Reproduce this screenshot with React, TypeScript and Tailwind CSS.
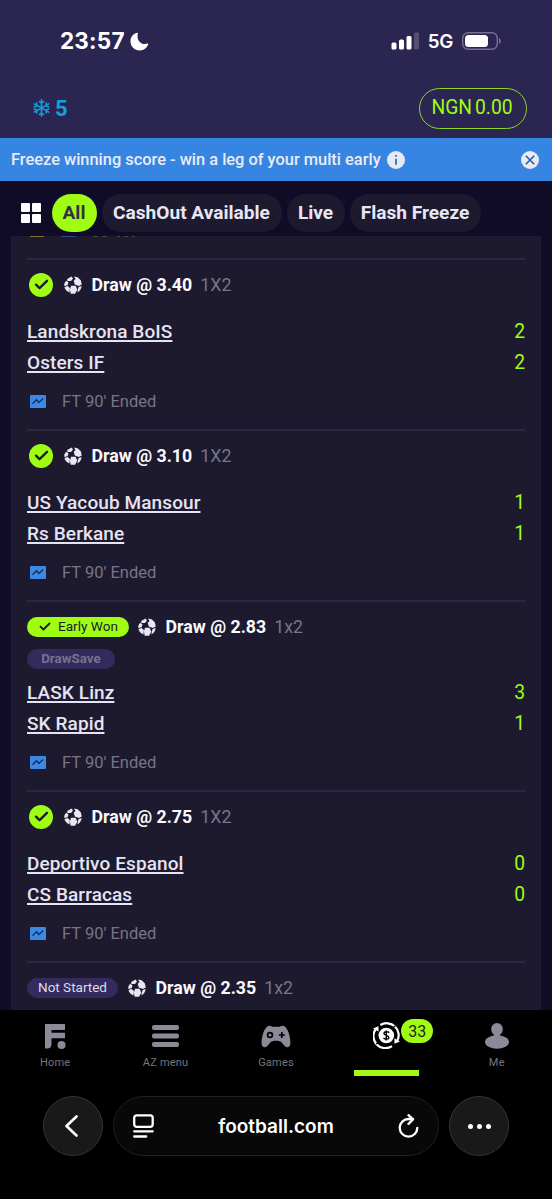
import type { ReactNode } from "react";

type Match = {
  odds: string;
  market: string;
  status: "won" | "early" | "pending";
  tag?: string;
  home?: [string, number];
  away?: [string, number];
};

const matches: Match[] = [
  { odds: "3.40", market: "1X2", status: "won", home: ["Landskrona BoIS", 2], away: ["Osters IF", 2] },
  { odds: "3.10", market: "1X2", status: "won", home: ["US Yacoub Mansour", 1], away: ["Rs Berkane", 1] },
  { odds: "2.83", market: "1x2", status: "early", tag: "DrawSave", home: ["LASK Linz", 3], away: ["SK Rapid", 1] },
  { odds: "2.75", market: "1X2", status: "won", home: ["Deportivo Espanol", 0], away: ["CS Barracas", 0] },
  { odds: "2.35", market: "1x2", status: "pending", tag: "" },
];

function Ball() {
  return (
    <svg className="h-[18px] w-[18px] shrink-0" viewBox="0 0 18 18" fill="#e9e7f2">
      <path d="M3.2 2.9 7.6.4 9 2.4 7 5 3.4 4.9Z" />
      <path d="M10 .6 13.6 1.2 16.8 4.2 17.8 8.4 14.8 10.1 10.8 8.5 9.7 4.8 11.5 3Z" />
      <path d="M2.4 4.7 4.5 6.5 3.6 9.2.3 10C0 7.5.8 6 2.4 4.7Z" />
      <path d="M.5 11 3.6 10 5.9 12.1 5.5 16.5C2.8 15.6.9 13.5.5 11Z" />
      <path d="M7.1 9.7 11.6 9.7 13.3 13.7 11 17.8 6.7 17.8 5.9 13.5Z" />
      <path d="M14.6 11.1 17.6 9.9C17.3 12.8 16 15 13.4 16.4L13.9 13.5Z" />
    </svg>
  );
}

function Check({ className }: { className: string }) {
  return (
    <svg className={className} viewBox="0 0 16 12" fill="none" stroke="#1d1b30" strokeWidth="2.5" strokeLinecap="round" strokeLinejoin="round">
      <path d="M2 6.1 5.9 10 14 2" />
    </svg>
  );
}

function Status({ status }: { status: Match["status"] }) {
  if (status === "won")
    return (
      <span className="ml-0.5 mr-[11px] flex h-6 w-6 items-center justify-center rounded-full bg-[#9ffc12]">
        <Check className="h-[11px] w-[15px]" />
      </span>
    );
  if (status === "early")
    return (
      <span className="mr-[9px] flex h-5 w-[102px] items-center rounded-full bg-[#9ffc12] pl-3 text-[13.6px] text-[#1d1b30]">
        <Check className="mr-[7px] h-[9px] w-3" />
        Early Won
      </span>
    );
  return (
    <span className="mr-[10px] flex h-5 w-[91px] items-center justify-center rounded-full bg-[#332b5c] text-[13.5px] text-[#dddbea]">
      Not Started
    </span>
  );
}

function Team({ team }: { team: [string, number] }) {
  return (
    <div className="flex h-[31.5px] items-center justify-between text-[19px] font-medium">
      <span className="tracking-[0.1px] text-[#e6e3f2] underline decoration-[1.5px] underline-offset-2 [text-decoration-skip-ink:none]">{team[0]}</span>
      <span className="pt-px text-[19.3px] font-normal text-[#9ffc12]">{team[1]}</span>
    </div>
  );
}

function MatchRow({ match }: { match: Match }) {
  const tagged = match.tag !== undefined;
  return (
    <section className={tagged ? "h-[190px] shrink-0 border-t-2 border-[#2b2746]" : "h-[171px] shrink-0 border-t-2 border-[#2b2746]"}>
      <div className="flex h-[49px] items-center">
        <Status status={match.status} />
        <Ball />
        <span className="ml-[9.5px] pt-[2px] text-[17.75px] font-bold text-[#faf9ff]">Draw @ {match.odds}</span>
        <span className="ml-[8px] pt-[2px] text-[17.8px] text-[#777587]">{match.market}</span>
      </div>
      {tagged ? (
        <div className="-mt-[4px] mb-[6px] flex h-[24px] items-center">
          <span className="flex h-5 w-[88px] items-center justify-center rounded-full bg-[#332b5c] text-[13.4px] font-bold text-[#77728c]">
            {match.tag}
          </span>
        </div>
      ) : (
        <div className="h-[7px]" />
      )}
      {match.home && match.away && (
        <>
          <Team team={match.home} />
          <Team team={match.away} />
          <div className="flex h-[46px] items-center pl-[2.5px]">
            <svg className="-mt-px h-[13px] w-4" viewBox="0 0 16 13" fill="none">
              <rect width="16" height="13" rx="1" fill="#3b88e5" />
              <path d="m2.5 8.7 4-4 2.3 2.7 4.4-4" stroke="#172c5b" strokeWidth="1.4" />
            </svg>
            <span className="ml-[16.5px] pt-px text-[16.5px] text-[#777587]">FT 90' Ended</span>
          </div>
        </>
      )}
    </section>
  );
}

function Chip({ children, className }: { children: ReactNode; className: string }) {
  return (
    <span className={`flex h-[38px] shrink-0 items-center justify-center rounded-full pt-px text-[19.1px] font-bold ${className}`}>
      {children}
    </span>
  );
}

function NavItem({ label, children }: { label: string; children: ReactNode }) {
  return (
    <div className="flex w-[110.4px] flex-col items-center pt-3">
      <div className="flex h-7 items-center">{children}</div>
      <span className="mt-[5px] text-[11px] leading-[15px] tracking-[0.2px] text-[#777481]">{label}</span>
    </div>
  );
}

export default function App() {
  return (
    <main className="flex h-[1199px] w-[552px] flex-col overflow-hidden bg-black font-['Roboto',sans-serif]">
      <header className="h-[138px] shrink-0 bg-[#2b2551]">
        <div className="flex h-[82px] items-center justify-between pl-[60px] pr-[51px] text-white">
          <div className="flex items-center font-['Inter',sans-serif] text-[22.5px] font-bold">
            <span className="tracking-[0.2px]">23:57</span>
            <svg className="ml-[5px] h-[19px] w-[19px]" viewBox="0 0 19 19" fill="white">
              <path d="M7.1.7C3 1.9.5 5 .5 9.2c0 5.2 4 9.2 9.2 9.2 4 0 7.4-2.4 8.5-6.1.2-.5-.2-.9-.7-.7-6.1 2.1-11.3-2.8-9.7-10.1.1-.5-.2-.9-.7-.8Z" />
            </svg>
          </div>
          <div className="flex items-center">
            <svg className="h-[18px] w-7" viewBox="0 0 28 18" fill="white">
              <rect x=".5" y="10.5" width="5" height="7" rx="1.5" />
              <rect x="8" y="7.5" width="5" height="10" rx="1.5" />
              <rect x="15.5" y="4" width="5" height="13.5" rx="1.5" />
              <rect x="23" y=".5" width="5" height="17" rx="1.5" opacity=".2" />
            </svg>
            <span className="ml-[9px] pt-[2px] font-['Inter',sans-serif] text-[18.8px] font-semibold tracking-[-0.3px]">5G</span>
            <svg className="ml-[9px] h-[18px] w-[39px]" viewBox="0 0 39 18">
              <rect x=".7" y=".7" width="34.6" height="16.6" rx="5.5" fill="none" stroke="#77718f" strokeWidth="1.4" />
              <rect x="3" y="3" width="23" height="12" rx="3.5" fill="white" />
              <path d="M37 6c2.3 1 2.3 5 0 6Z" fill="#77718f" />
            </svg>
          </div>
        </div>
        <div className="mt-[5px] flex h-[42px] items-center justify-between pl-[33px] pr-[25px]">
          <div className="flex items-center text-[22px] font-bold text-[#169ddd]">
            <svg className="mr-[5px] h-[18px] w-[17px]" viewBox="0 0 17 18" fill="none" stroke="#169ddd" strokeWidth="1.6" strokeLinecap="round">
              <path d="M8.5.9v16.2M6.4 2.5l2.1 1.8 2.1-1.8M6.4 15.5l2.1-1.8 2.1 1.8M1.2 4.9l14.6 8.2M1.3 7.9l2.6-1-.2-2.8m9.6 9.8-.2-2.8 2.6-1M15.8 4.9 1.2 13.1m12.1-9-.2 2.8 2.6 1M1.3 10.1l2.6 1-.2 2.8" />
            </svg>
            5
          </div>
          <div className="flex h-[41px] w-[108px] items-center justify-center rounded-full border-[1.5px] border-[#8bda22] pr-[2px] pt-px text-[19.3px] text-[#9ffc12]">
            NGN<span className="ml-[3px]">0.00</span>
          </div>
        </div>
      </header>

      <div className="flex h-[43px] shrink-0 items-center bg-[#3685e2] pl-[11px] pr-[13px] text-[16.4px] font-medium text-[#e9ecf7]">
        <span className="pt-[2px]">Freeze winning score - win a leg of your multi early</span>
        <svg className="ml-[6px] h-[18px] w-[18px]" viewBox="0 0 18 18">
          <circle cx="9" cy="9" r="9" fill="#e8eaf3" />
          <path d="M9 7.7v6M9 4v1.7" stroke="#357bcf" strokeWidth="2" />
        </svg>
        <svg className="ml-auto h-[18px] w-[18px]" viewBox="0 0 18 18">
          <circle cx="9" cy="9" r="9" fill="#e8eaf3" />
          <path d="m4.8 4.8 8.4 8.4m0-8.4-8.4 8.4" stroke="#285ca7" strokeWidth="1.6" />
        </svg>
      </div>

      <div className="flex h-[55px] shrink-0 items-center bg-[#100c27] pl-[21px] pt-2">
        <svg className="mr-[11px] h-5 w-5" viewBox="0 0 20 20" fill="white">
          <rect width="9" height="9" rx="1" /><rect x="11" width="9" height="9" rx="1" />
          <rect y="11" width="9" height="9" rx="1" /><rect x="11" y="11" width="9" height="9" rx="1" />
        </svg>
        <Chip className="w-[45px] bg-[#9ffc12] pr-px text-[#333243]">All</Chip>
        <Chip className="ml-[5px] w-[180px] bg-[#1d1a30] pr-px text-[#e9e6f4]">CashOut Available</Chip>
        <Chip className="ml-[5px] w-[58px] bg-[#1d1a30] pr-px text-[#e9e6f4]">Live</Chip>
        <Chip className="ml-[5px] w-[131px] bg-[#1d1a30] pr-px text-[#e9e6f4]">Flash Freeze</Chip>
      </div>

      <div className="h-[774px] shrink-0 overflow-hidden bg-[#100c27] px-[11px]">
        <div className="flex h-full flex-col overflow-hidden bg-[#1d1a30] px-4">
          <div className="flex h-[22px] shrink-0 items-start overflow-hidden">
            <span className="ml-[3px] h-px w-[14px] bg-[#82732b]" />
            <span className="ml-[17px] h-px w-[15px] bg-[#284b88]" />
            <span className="ml-[17px] h-px w-[5px] bg-[#4c472c]" />
            <span className="ml-[4px] h-px w-[5px] bg-[#4c472c]" />
            <span className="ml-[10px] h-px w-[3px] bg-[#4c472c]" />
            <span className="ml-[4px] h-px w-[4px] bg-[#4c472c]" />
            <span className="ml-[4px] h-px w-[3px] bg-[#4c472c]" />
          </div>
          {matches.map((match) => <MatchRow key={match.odds} match={match} />)}
        </div>
      </div>

      <nav className="flex h-[67px] shrink-0 bg-black">
        <NavItem label="Home">
          <svg className="h-[25px] w-[21px]" viewBox="0 0 21 25" fill="#8c8999">
            <path d="M0 0h20v6H6.5v2.8H20v5.4H6.5V20Q6.5 24.5 2 24.5H0Z" />
            <circle cx="16.5" cy="21" r="4" />
          </svg>
        </NavItem>
        <NavItem label="AZ menu">
          <svg className="h-[22px] w-[27px]" viewBox="0 0 27 22" fill="#8c8999">
            <rect width="27" height="5" rx="2" /><rect y="8.5" width="27" height="5" rx="2" /><rect y="17" width="27" height="5" rx="2" />
          </svg>
        </NavItem>
        <NavItem label="Games">
          <svg className="h-[23px] w-[30px]" viewBox="0 0 30 23">
            <path d="M6.2 1.6C7.8.5 9.7.4 11 1.7h8c1.3-1.3 3.2-1.2 4.8-.1C27 4 29.4 11.7 29.4 18.5c0 3.4-3.2 5-5.5 2.7L20 16.8c-2.2-1.5-7.8-1.5-10 0l-3.9 4.4C3.8 23.5.6 21.9.6 18.5.6 11.7 3 4 6.2 1.6Z" fill="#8c8999" />
            <circle cx="9" cy="10" r="2.4" fill="none" stroke="black" strokeWidth="1.7" />
            <path d="M20.8 7v6m-3-3h6" stroke="black" strokeWidth="1.7" />
          </svg>
        </NavItem>
        <div className="relative flex w-[110.4px] flex-col items-center pt-3">
          <svg className="h-[27px] w-[27px]" viewBox="0 0 27 27" fill="none">
            <circle cx="13.3" cy="13.5" r="7.8" fill="white" />
            <path d="M2.8 7A12 12 0 0 0 19 24.2M7.4 3A12 12 0 0 1 24.2 19" stroke="white" strokeWidth="2.2" />
            <path d="M0 6.6 5.4 4.2 5.6 9.6ZM26.9 19.4l-5.5 2.4.1-5.6Z" fill="white" />
            <path d="m3.1 21.9 2.4-1.5m14.8-15 2.3-1.8" stroke="black" strokeWidth="1.2" />
            <path d="M16.2 10.8c-1.5-1.9-5.5-1.2-5.2.8.4 2 4.8 1.6 4.9 3.8.1 2.2-3.9 2.4-5.4.4m2.8-7.4v10" stroke="black" strokeWidth="1.4" />
          </svg>
          <span className="absolute left-[70px] top-[9px] flex h-6 w-[32px] items-center justify-center rounded-full bg-[#9ffc12] pt-px text-[16px] text-[#25261e]">33</span>
          <span className="mt-auto mb-px h-[6px] w-[65px] bg-[#a4f717]" />
        </div>
        <NavItem label="Me">
          <svg className="h-[26px] w-6" viewBox="0 0 24 26" fill="#8c8999">
            <ellipse cx="12" cy="6.3" rx="5.8" ry="6.3" />
            <rect x="9" y="10" width="6" height="7" />
            <ellipse cx="12" cy="19" rx="12" ry="6.8" />
          </svg>
        </NavItem>
      </nav>

      <footer className="flex flex-1 items-start bg-black pl-[43px] pt-[19px]">
        <button className="flex h-[60px] w-[60px] items-center justify-center rounded-full border border-[#343434] bg-[#191919]">
          <svg className="h-[22px] w-[13px] -translate-x-0.5" viewBox="0 0 13 22" fill="none" stroke="white" strokeWidth="2.6" strokeLinecap="round" strokeLinejoin="round">
            <path d="m11.5 1.5-10 9.5 10 9.5" />
          </svg>
        </button>
        <div className="ml-[10px] flex h-[60px] w-[326px] items-center justify-between rounded-full border border-[#202020] bg-[#080808] pl-[19px] pr-[19px] text-white">
          <svg className="h-[24px] w-[21px]" viewBox="0 0 21 24" fill="none" stroke="white" strokeWidth="2.3" strokeLinecap="round">
            <rect x="1.2" y="1.3" width="18.5" height="11.5" rx="2.5" /><path d="M1.2 17.3h18.5M1.2 22.5h12" />
          </svg>
          <span className="pt-[2px] font-['Inter',sans-serif] text-[19px] font-semibold">football.com</span>
          <svg className="h-[24px] w-[21px]" viewBox="0 0 21 24" fill="none" stroke="white" strokeWidth="2.3" strokeLinecap="round" strokeLinejoin="round">
            <path d="M10.5 5A8.8 8.8 0 1 0 19.3 13.8M10.5 5h4.5M10.5 1.2 15 5.4l-4.5 4.5" />
          </svg>
        </div>
        <button className="ml-[10px] flex h-[60px] w-[60px] items-center justify-center gap-[4px] rounded-full border border-[#343434] bg-[#191919]">
          <span className="h-[5px] w-[5px] rounded-full bg-white" />
          <span className="h-[5px] w-[5px] rounded-full bg-white" />
          <span className="h-[5px] w-[5px] rounded-full bg-white" />
        </button>
      </footer>
    </main>
  );
}
